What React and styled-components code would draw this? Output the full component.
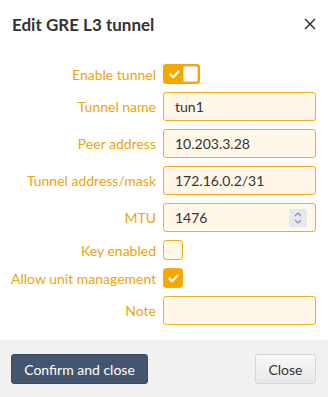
import styled, { createGlobalStyle } from "styled-components";

const GlobalStyle = createGlobalStyle`
  html, body {
    margin: 0;
    padding: 0;
    background: #fff;
  }
  body {
    font-family: Lato, "Open Sans", sans-serif;
  }
  * { box-sizing: border-box; }
`;

const fields = [
  { type: "toggle", label: "Enable tunnel", on: true },
  { type: "text", label: "Tunnel name", value: "tun1" },
  { type: "text", label: "Peer address", value: "10.203.3.28" },
  { type: "text", label: "Tunnel address/mask", value: "172.16.0.2/31" },
  { type: "number", label: "MTU", value: "1476" },
  { type: "check", label: "Key enabled", on: false },
  { type: "check", label: "Allow unit management", on: true },
  { type: "text", label: "Note", value: "" },
];

function Tick() {
  return (
    <svg width="11" height="9" viewBox="0 0 11 9">
      <path d="M1.5 4.6 L4.2 7.2 L9.5 1.6" fill="none" stroke="#fff" strokeWidth="2.2" strokeLinecap="round" strokeLinejoin="round" />
    </svg>
  );
}

function Field({ field }) {
  if (field.type === "toggle") {
    return (
      <Toggle>
        <ToggleOn><Tick /></ToggleOn>
        <ToggleKnob />
      </Toggle>
    );
  }
  if (field.type === "check") {
    return <Check $on={field.on}>{field.on && <Tick />}</Check>;
  }
  return (
    <InputBox>
      <InputText>{field.value}</InputText>
      {field.type === "number" && (
        <Spinner>
          <svg width="8" height="14" viewBox="0 0 8 14">
            <path d="M1 5 L4 2 L7 5 M1 9 L4 12 L7 9" fill="none" stroke="#8a8a98" strokeWidth="1.1" />
          </svg>
        </Spinner>
      )}
    </InputBox>
  );
}

export default function App() {
  return (
    <>
      <GlobalStyle />
      <Dialog>
        <Header>
          <Title>Edit GRE L3 tunnel</Title>
          <CloseX>
            <svg width="12" height="12" viewBox="0 0 12 12">
              <path d="M1 1 L11 11 M11 1 L1 11" stroke="#333" strokeWidth="1.5" />
            </svg>
          </CloseX>
        </Header>
        <Form>
          {fields.map((f) => (
            <Row key={f.label} $tall={f.type !== "toggle" && f.type !== "check"}>
              <Label>{f.label}</Label>
              <Field field={f} />
            </Row>
          ))}
        </Form>
        <Footer>
          <PrimaryButton>Confirm and close</PrimaryButton>
          <SecondaryButton>Close</SecondaryButton>
        </Footer>
      </Dialog>
    </>
  );
}

const Dialog = styled.div`
  width: 328px;
  height: 397px;
  display: flex;
  flex-direction: column;
  background: #fff;
`;

const Header = styled.div`
  height: 50px;
  display: flex;
  align-items: center;
  justify-content: space-between;
  padding: 0 12px 2px 12px;
`;

const Title = styled.h1`
  margin: 0;
  font-size: 17px;
  font-weight: 700;
  color: #333;
`;

const CloseX = styled.span`
  display: flex;
  cursor: pointer;
`;

const Form = styled.div`
  flex: 1;
  display: flex;
  flex-direction: column;
  gap: 8px;
  padding: 14px 12px 0 11px;
`;

const Row = styled.div`
  display: grid;
  grid-template-columns: 145px 1fr;
  column-gap: 7px;
  align-items: center;
  height: ${(p) => (p.$tall ? "29px" : "20px")};
`;

const Label = styled.label`
  text-align: right;
  font-size: 14px;
  color: #f0a30a;
  white-space: nowrap;
`;

const InputBox = styled.div`
  height: 29px;
  display: flex;
  align-items: center;
  justify-content: space-between;
  border: 1px solid #f5ac1e;
  border-radius: 3px;
  background: #fff8e8;
  padding: 0 9px 0 11px;
`;

const InputText = styled.span`
  font-size: 14px;
  color: #333;
`;

const Spinner = styled.span`
  width: 18px;
  height: 18px;
  background: #e8e8ee;
  display: flex;
  align-items: center;
  justify-content: center;
  margin-right: -1px;
`;

const Toggle = styled.div`
  width: 37px;
  height: 20px;
  display: flex;
  border-radius: 3px;
  background: #f6a700;
  padding: 2px;
`;

const ToggleOn = styled.span`
  width: 18px;
  display: flex;
  align-items: center;
  justify-content: center;
`;

const ToggleKnob = styled.span`
  flex: 1;
  background: #fff;
  border: 1px solid #ddd;
  border-radius: 2px;
`;

const Check = styled.div`
  width: 20px;
  height: 20px;
  border-radius: 3px;
  border: 1px solid #f5ac1e;
  background: ${(p) => (p.$on ? "#f6a700" : "#fff8e8")};
  display: flex;
  align-items: center;
  justify-content: center;
`;

const Footer = styled.div`
  height: 57px;
  background: #f1f1f1;
  display: flex;
  align-items: center;
  justify-content: space-between;
  padding: 0 12px 0 11px;
`;

const PrimaryButton = styled.button`
  height: 30px;
  width: 137px;
  border: 1px solid #3a4a63;
  border-radius: 3px;
  background: #45556f;
  color: #fff;
  font-family: Lato, sans-serif;
  font-size: 14px;
  margin-top: 1px;
`;

const SecondaryButton = styled.button`
  height: 30px;
  width: 61px;
  border: 1px solid #d6d6d6;
  border-radius: 3px;
  background: linear-gradient(#f8f8f8, #e8e8e8);
  color: #333;
  font-family: Lato, sans-serif;
  font-size: 14px;
  margin-top: 1px;
`;
